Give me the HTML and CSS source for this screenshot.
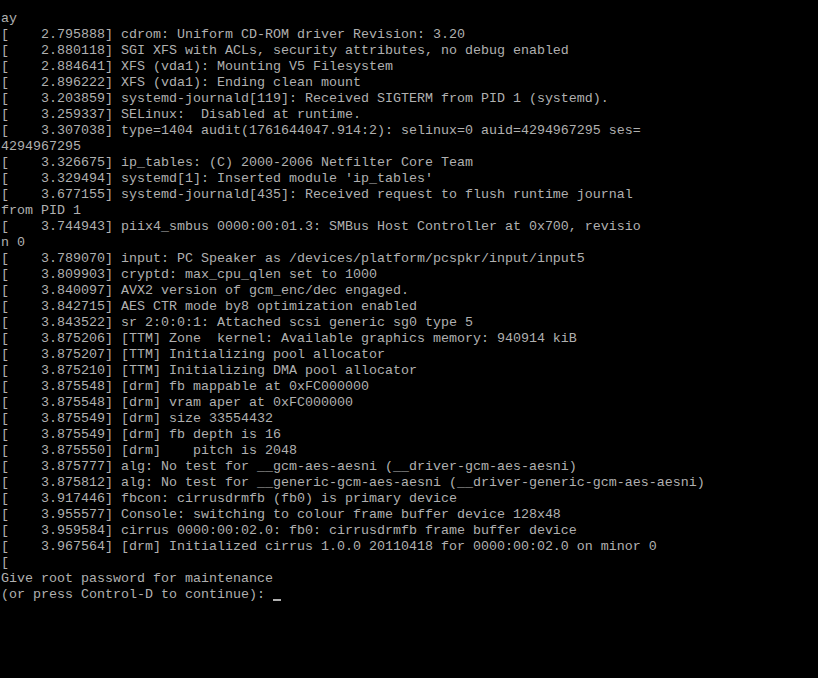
FILE: index.html
```html
<!DOCTYPE html>
<html>
<head>
<meta charset="utf-8">
<link rel="stylesheet" href="styles.css">
</head>
<body>
<pre class="console">ay
[    2.795888] cdrom: Uniform CD-ROM driver Revision: 3.20
[    2.880118] SGI XFS with ACLs, security attributes, no debug enabled
[    2.884641] XFS (vda1): Mounting V5 Filesystem
[    2.896222] XFS (vda1): Ending clean mount
[    3.203859] systemd-journald[119]: Received SIGTERM from PID 1 (systemd).
[    3.259337] SELinux:  Disabled at runtime.
[    3.307038] type=1404 audit(1761644047.914:2): selinux=0 auid=4294967295 ses=
4294967295
[    3.326675] ip_tables: (C) 2000-2006 Netfilter Core Team
[    3.329494] systemd[1]: Inserted module 'ip_tables'
[    3.677155] systemd-journald[435]: Received request to flush runtime journal
from PID 1
[    3.744943] piix4_smbus 0000:00:01.3: SMBus Host Controller at 0x700, revisio
n 0
[    3.789070] input: PC Speaker as /devices/platform/pcspkr/input/input5
[    3.809903] cryptd: max_cpu_qlen set to 1000
[    3.840097] AVX2 version of gcm_enc/dec engaged.
[    3.842715] AES CTR mode by8 optimization enabled
[    3.843522] sr 2:0:0:1: Attached scsi generic sg0 type 5
[    3.875206] [TTM] Zone  kernel: Available graphics memory: 940914 kiB
[    3.875207] [TTM] Initializing pool allocator
[    3.875210] [TTM] Initializing DMA pool allocator
[    3.875548] [drm] fb mappable at 0xFC000000
[    3.875548] [drm] vram aper at 0xFC000000
[    3.875549] [drm] size 33554432
[    3.875549] [drm] fb depth is 16
[    3.875550] [drm]    pitch is 2048
[    3.875777] alg: No test for __gcm-aes-aesni (__driver-gcm-aes-aesni)
[    3.875812] alg: No test for __generic-gcm-aes-aesni (__driver-generic-gcm-aes-aesni)
[    3.917446] fbcon: cirrusdrmfb (fb0) is primary device
[    3.955577] Console: switching to colour frame buffer device 128x48
[    3.959584] cirrus 0000:00:02.0: fb0: cirrusdrmfb frame buffer device
[    3.967564] [drm] Initialized cirrus 1.0.0 20110418 for 0000:00:02.0 on minor 0
[
Give root password for maintenance
(or press Control-D to continue): <span class="cursor"></span></pre>
</body>
</html>
```
FILE: styles.css
```css
html, body {
  margin: 0;
  padding: 0;
  background: #000;
  height: 100%;
  overflow: hidden;
}
.console {
  margin: 0;
  padding: 11px 0 0 1px;
  font-family: "Liberation Mono", "DejaVu Sans Mono", monospace;
  font-size: 13.333px;
  line-height: 16px;
  color: #b0b0b0;
  white-space: pre;
}
.cursor {
  display: inline-block;
  width: 8px;
  height: 2px;
  background: #b0b0b0;
  vertical-align: -3px;
}
```
